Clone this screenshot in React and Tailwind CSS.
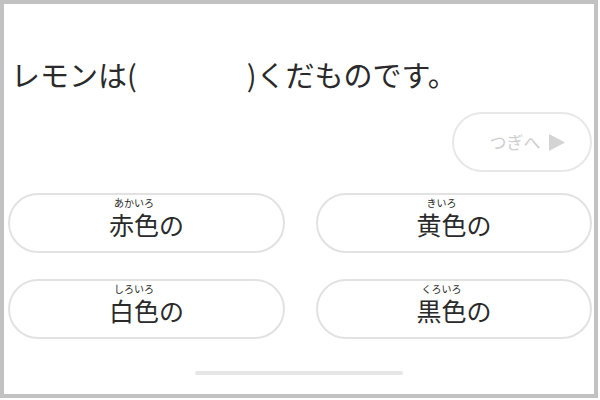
import React from "react";

const choices = [
  { kanji: "赤色", ruby: "あかいろ" },
  { kanji: "黄色", ruby: "きいろ" },
  { kanji: "白色", ruby: "しろいろ" },
  { kanji: "黒色", ruby: "くろいろ" },
];

function Choice({ kanji, ruby }) {
  return (
    <button className="h-[60px] rounded-full border-2 border-[#e2e2e2] bg-white flex items-center justify-center text-[#2a2a2a]">
      <span className="text-[25px] leading-none flex items-center mt-[2px]">
        <span className="relative">
          <span className="absolute left-0 right-0 -top-[14px] text-center text-[10px] leading-none whitespace-nowrap">
            {ruby}
          </span>
          {kanji}
        </span>
        <span>の</span>
      </span>
    </button>
  );
}

export default function App() {
  return (
    <div
      className="w-[600px] h-[400px] bg-white"
      style={{ fontFamily: '"Noto Sans CJK JP", "Noto Sans", sans-serif' }}
    >
      <div className="w-[598px] h-[398px] border-4 border-[#c2c2c2] flex flex-col">
        <div className="mt-[51px] h-[40px] pl-[7px] flex items-center text-[29px] text-[#2a2a2a] whitespace-nowrap">
          <span>レモンは(</span>
          <span className="inline-block w-[110px]" />
          <span>)くだものです。</span>
        </div>
        <div className="mt-[17px] flex justify-end pr-[2px]">
          <button className="w-[140px] h-[60px] rounded-full border-2 border-[#e8e8e8] flex items-center justify-center gap-[8px] text-[#cfcfcf] text-[17px] pl-[10px]">
            <span>つぎへ</span>
            <svg width="16" height="17" viewBox="0 0 16 17">
              <polygon points="0,0 16,8.5 0,17" fill="#d4d4d4" />
            </svg>
          </button>
        </div>
        <div className="mt-[21px] grid grid-cols-[277px_276px] gap-x-[31px] gap-y-[26px] pl-[4px]">
          {choices.map((c) => (
            <Choice key={c.kanji} {...c} />
          ))}
        </div>
        <div className="mt-[32px] flex justify-center">
          <div className="w-[208px] h-[4px] rounded-full bg-[#e6e6e6]" />
        </div>
      </div>
    </div>
  );
}
